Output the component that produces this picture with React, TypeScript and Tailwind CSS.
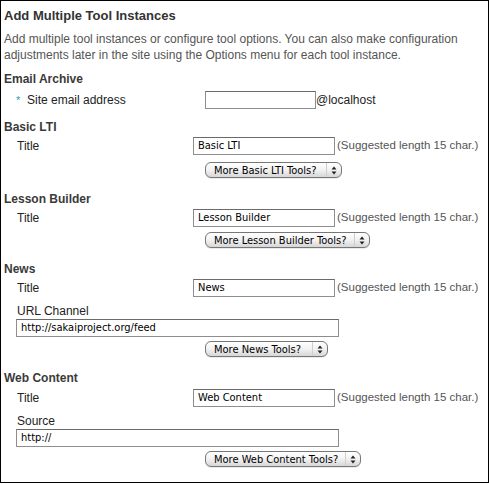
import React from "react";

const sans = { fontFamily: '"Liberation Sans", Arial, sans-serif' };
const ctl = { fontFamily: '"DejaVu Sans Condensed", "DejaVu Sans", sans-serif' };

function TextInput({ value, w }: { value: string; w: string }) {
  return (
    <div
      className={`${w} h-[18px] border border-[#8e8e8e] border-t-[#6a6a6a] bg-white flex items-center pl-[4px] text-[11px] text-black`}
      style={ctl}
    >
      {value}
    </div>
  );
}

function Arrows() {
  return (
    <svg width="6" height="9" viewBox="0 0 6 9" className="block">
      <path d="M3 0.5 L5.5 3.5 L0.5 3.5 Z" fill="#222" />
      <path d="M3 8.5 L5.5 5.5 L0.5 5.5 Z" fill="#222" />
    </svg>
  );
}

function SelectBtn({ label, w }: { label: string; w: string }) {
  return (
    <div className="flex pl-[201px]">
      <div
        className={`${w} h-[16px] rounded-[6px] border border-[#777] bg-gradient-to-b from-white via-[#f2f2f2] to-[#d6d6d6] flex items-center text-[11px] text-black shadow-[0_1px_0_rgba(0,0,0,0.08)]`}
        style={ctl}
      >
        <div className="flex-1 pl-[8px] leading-none whitespace-nowrap">{label}</div>
        <div className="w-[15px] h-full flex items-center justify-center border-l border-[#cfcfcf]">
          <Arrows />
        </div>
      </div>
    </div>
  );
}

function Section({ title, mt }: { title: string; mt: string }) {
  return (
    <div className={`${mt} h-[16px] leading-[16px] text-[12px] font-bold text-[#3a3a3a]`}>{title}</div>
  );
}

function TitleRow({ value, mt }: { value: string; mt: string }) {
  return (
    <div className={`${mt} h-[18px] flex items-center`}>
      <div className="w-[189px] pl-[13px] text-[12px] text-[#222]">Title</div>
      <TextInput value={value} w="w-[142px]" />
      <div className="pl-[2px] text-[11.5px] text-[#555] whitespace-nowrap">(Suggested length 15 char.)</div>
    </div>
  );
}

function Label({ text, mt }: { text: string; mt: string }) {
  return <div className={`${mt} h-[16px] leading-[16px] pl-[13px] text-[12px] text-[#222]`}>{text}</div>;
}

export default function App() {
  return (
    <div className="w-[489px] h-[484px] bg-white overflow-hidden" style={sans}>
      <div className="w-[489px] h-[483px] border border-black pl-[3px] box-border">
        <div className="mt-[6px] h-[18px] leading-[18px] text-[13px] font-bold text-[#333]">
          Add Multiple Tool Instances
        </div>
        <div className="mt-[6px] text-[12px] leading-[16px] text-[#555] pr-[10px]">
          Add multiple tool instances or configure tool options. You can also make configuration adjustments later in the site using the Options menu for each tool instance.
        </div>

        <Section title="Email Archive" mt="mt-[8px]" />
        <div className="mt-[4px] h-[18px] flex items-center">
          <div className="w-[201px] pl-[12px] flex items-center text-[12px] text-[#222]">
            <span className="text-[#2a9fb0] w-[11px] text-[11px] leading-none">*</span>
            <span>Site email address</span>
          </div>
          <TextInput value="" w="w-[111px]" />
          <div className="text-[12px] text-[#222]">@localhost</div>
        </div>

        <Section title="Basic LTI" mt="mt-[10px]" />
        <TitleRow value="Basic LTI" mt="mt-[2px]" />
        <div className="mt-[7px]">
          <SelectBtn label="More Basic LTI Tools?" w="w-[137px]" />
        </div>

        <Section title="Lesson Builder" mt="mt-[13px]" />
        <TitleRow value="Lesson Builder" mt="mt-[2px]" />
        <div className="mt-[5px]">
          <SelectBtn label="More Lesson Builder Tools?" w="w-[165px]" />
        </div>

        <Section title="News" mt="mt-[13px]" />
        <TitleRow value="News" mt="mt-[2px]" />
        <Label text="URL Channel" mt="mt-[6px]" />
        <div className="pl-[12px]">
          <TextInput value="http://sakaiproject.org/feed" w="w-[323px]" />
        </div>
        <div className="mt-[4px]">
          <SelectBtn label="More News Tools?" w="w-[123px]" />
        </div>

        <Section title="Web Content" mt="mt-[13px]" />
        <TitleRow value="Web Content" mt="mt-[3px]" />
        <Label text="Source" mt="mt-[6px]" />
        <div className="pl-[12px]">
          <TextInput value="http://" w="w-[323px]" />
        </div>
        <div className="mt-[4px]">
          <SelectBtn label="More Web Content Tools?" w="w-[156px]" />
        </div>
      </div>
    </div>
  );
}
